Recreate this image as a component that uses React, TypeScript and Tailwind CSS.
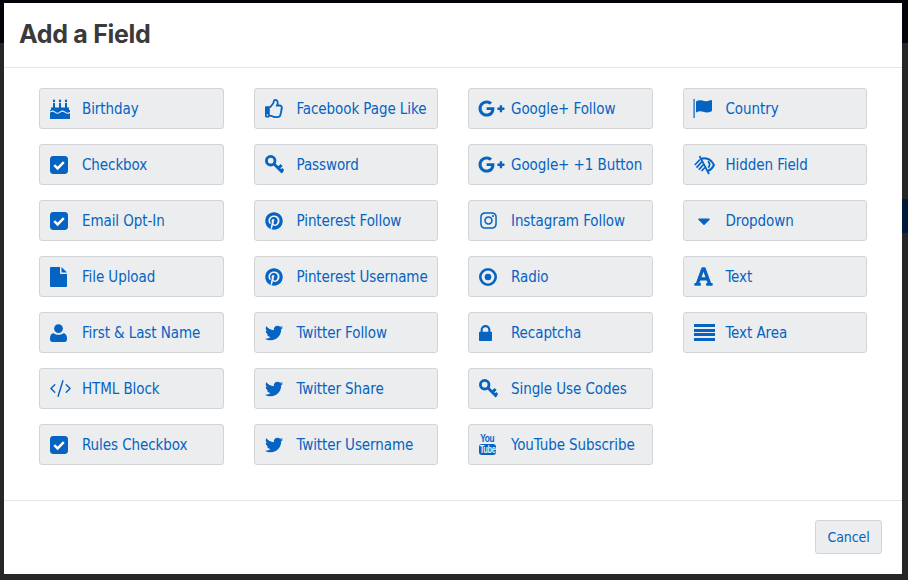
import type { ReactNode } from "react";
import {
  FaRegThumbsUp,
  FaPinterest,
  FaTwitter,
  FaGooglePlusG,
  FaInstagram,
  FaCaretDown,
  FaFont,
} from "react-icons/fa";
import { CodeXml } from "lucide-react";

const BG = "#ebedef";

function CakeIcon() {
  return (
    <svg viewBox="0 0 20 20" className="w-[20px] h-[20px]" fill="currentColor">
      <path d="M4 0c.8.9 1.200 1.500 1.200 2.100a1.200 1.200 0 0 1-2.400 0c0-.6.4-1.200 1.200-2.100zM10 0c.8.9 1.200 1.500 1.200 2.100a1.200 1.200 0 0 1-2.400 0c0-.6.4-1.200 1.200-2.100zM16 0c.8.9 1.200 1.500 1.200 2.100a1.200 1.200 0 0 1-2.400 0c0-.6.4-1.200 1.200-2.100z" />
      <rect x="3" y="4" width="2" height="6" />
      <rect x="9" y="4" width="2" height="6" />
      <rect x="15" y="4" width="2" height="6" />
      <path d="M1 8.500h18v3H1zM0 11h20v9H0z" />
      <path d="M0 13.200c1.700-1.400 3.300-1.400 5 0s3.300 1.400 5 0 3.300-1.400 5 0 3.300 1.400 5 0" fill="none" stroke={BG} strokeWidth="1.100" />
    </svg>
  );
}

function CheckIcon() {
  return (
    <svg viewBox="0 0 18 18" className="w-[18px] h-[18px]">
      <rect width="18" height="18" rx="3.400" fill="currentColor" />
      <path d="M4.300 9.200l3.300 3.200 6.200-6.200" fill="none" stroke="white" strokeWidth="2.500" />
    </svg>
  );
}

function FileIcon() {
  return (
    <svg viewBox="0 0 17 20" className="w-[17px] h-[20px]" fill="currentColor">
      <path d="M0 .8C0 .3.3 0 .8 0H10v6c0 .6.4 1 1 1h6v12.200c0 .5-.3.8-.8.8H.8c-.5 0-.8-.3-.8-.8z" />
      <path d="M11.500 0l5.500 5.500h-5.500z" />
    </svg>
  );
}

function UserIcon() {
  return (
    <svg viewBox="0 0 17 18" className="w-[17px] h-[18px]" fill="currentColor">
      <circle cx="8.500" cy="4.600" r="4.400" />
      <path d="M0 14.200c0-3.200 1.700-5 3.800-5 1.200 1 2.900 1.600 4.700 1.600s3.500-.6 4.700-1.600c2.100 0 3.800 1.800 3.800 5v1.300c0 1.500-1 2.500-2.400 2.500H2.400C1 18 0 17 0 15.500z" />
    </svg>
  );
}

function KeyIcon() {
  return (
    <svg viewBox="0 0 20 20" className="w-[19px] h-[19px]" fill="none" stroke="currentColor" strokeWidth="3">
      <circle cx="6" cy="6" r="4.500" />
      <path d="M9 9l9.500 9.500M14 14l3.500-3.500M17 17l2.200-2.200" />
    </svg>
  );
}

function RadioIcon() {
  return (
    <svg viewBox="0 0 18 18" className="w-[18px] h-[18px]" fill="currentColor">
      <circle cx="9" cy="9" r="7.700" fill="none" stroke="currentColor" strokeWidth="2.600" />
      <circle cx="9" cy="9" r="3.300" />
    </svg>
  );
}

function LockIcon() {
  return (
    <svg viewBox="0 0 13 16" className="w-[13px] h-[16px]" fill="currentColor">
      <path d="M0 7.500c0-.5.3-.8.8-.8h.8V5a4.900 4.900 0 0 1 9.800 0v1.700h.8c.5 0 .8.3.8.8v7.700c0 .5-.3.8-.8.8H.8c-.5 0-.8-.3-.8-.8zM3.700 6.700h5.600V5a2.800 2.800 0 0 0-5.600 0z" />
    </svg>
  );
}

function FlagIcon() {
  return (
    <svg viewBox="0 0 20 20" className="w-[20px] h-[20px] -mt-[1px] -ml-[1px]" fill="currentColor">
      <rect x="0.500" y="1" width="1.200" height="19" />
      <path d="M3 3.500c2-1.500 4-1.700 6.300-.9 2.600.9 5 1 8-.4.9-.4 1.700-.2 1.700.7v9.500c0 .5-.2.8-.7 1-2.900 1.300-5.400 1.300-8 .4-2.400-.8-4.700-.7-7.300.7z" />
    </svg>
  );
}

function HiddenIcon() {
  return (
    <svg viewBox="0 0 21 20" className="w-[21px] h-[20px]" fill="none" stroke="currentColor">
      <path d="M7 3.800c1-.3 2.200-.5 3.500-.5 4.300 0 7.600 3 9.500 6.700-1.200 2.600-3.400 4.900-6.300 6" strokeWidth="1.900" />
      <path d="M14 6.200c1.800 1.800 1.800 4.600.3 6.500" strokeWidth="1.700" />
      <path d="M5.500 1l9.500 18" strokeWidth="1.700" />
      <path d="M.8 10L6 4.500M2.500 12.600L8 6.500M4.800 14.600L9.300 9.700M7.500 16L11 12.500" strokeWidth="1.700" />
    </svg>
  );
}

function YoutubeIcon() {
  return (
    <span className="flex flex-col items-center w-[17px] font-['Liberation_Sans',sans-serif] font-bold">
      <span className="text-[11px] h-[9px] leading-[9px] tracking-[-0.5px] scale-x-75">You</span>
      <span className="mt-[1px] w-[17px] h-[11px] bg-[#0563c1] rounded-[3px] text-[#ebedef] text-[10px] leading-[11px] text-center overflow-hidden">
        <span className="inline-block scale-x-75 tracking-[-0.5px] -ml-[2px] -mr-[2px]">Tube</span>
      </span>
    </span>
  );
}

function TextAreaIcon() {
  return (
    <span className="flex flex-col gap-[1.67px] w-[21px]">
      <span className="h-[3px] bg-[#0563c1]" />
      <span className="h-[3px] bg-[#0563c1]" />
      <span className="h-[3px] bg-[#0563c1]" />
      <span className="h-[3px] bg-[#0563c1]" />
    </span>
  );
}

const check = <CheckIcon />;
const pin = <FaPinterest className="w-[18px] h-[18px]" />;
const bird = <FaTwitter className="w-[18px] h-[18px]" />;
const gplus = <FaGooglePlusG className="w-[27px] h-[27px] -ml-[1px] shrink-0" />;

type Field = { label: string; icon: ReactNode } | null;

const fields: Field[] = [
  { label: "Birthday", icon: <CakeIcon /> },
  { label: "Facebook Page Like", icon: <FaRegThumbsUp className="w-[19px] h-[19px]" /> },
  { label: "Google+ Follow", icon: gplus },
  { label: "Country", icon: <FlagIcon /> },

  { label: "Checkbox", icon: check },
  { label: "Password", icon: <KeyIcon /> },
  { label: "Google+ +1 Button", icon: gplus },
  { label: "Hidden Field", icon: <HiddenIcon /> },

  { label: "Email Opt-In", icon: check },
  { label: "Pinterest Follow", icon: pin },
  { label: "Instagram Follow", icon: <FaInstagram className="w-[19px] h-[19px]" /> },
  { label: "Dropdown", icon: <FaCaretDown className="w-[20px] h-[20px]" /> },

  { label: "File Upload", icon: <FileIcon /> },
  { label: "Pinterest Username", icon: pin },
  { label: "Radio", icon: <RadioIcon /> },
  { label: "Text", icon: <FaFont className="w-[21px] h-[21px] -ml-[1px]" /> },

  { label: "First & Last Name", icon: <UserIcon /> },
  { label: "Twitter Follow", icon: bird },
  { label: "Recaptcha", icon: <LockIcon /> },
  { label: "Text Area", icon: <TextAreaIcon /> },

  { label: "HTML Block", icon: <CodeXml className="w-[23px] h-[23px] -ml-[1px]" strokeWidth={1.5} /> },
  { label: "Twitter Share", icon: bird },
  { label: "Single Use Codes", icon: <KeyIcon /> },
  null,

  { label: "Rules Checkbox", icon: check },
  { label: "Twitter Username", icon: bird },
  { label: "YouTube Subscribe", icon: <YoutubeIcon /> },
  null,
];

export default function App() {
  return (
    <div className="relative w-[908px] h-[580px] overflow-hidden bg-[#262626] pt-[3px] pl-[4px] pr-[6px] pb-[6px] font-['DejaVu_Sans_Condensed','DejaVu_Sans',sans-serif]">
      {/* what's left of the page behind the modal */}
      <div className="absolute left-0 right-0 top-0 h-[43px] bg-[#02040a]" />
      <div className="absolute right-0 top-[199px] w-[6px] h-[34px] bg-[#001b3a]" />

      <div className="relative h-full bg-white flex flex-col">
        <div className="h-[65px] border-b border-[#e5e5e5] pl-[15px] flex items-center shrink-0">
          <h2 className="font-['Inter',sans-serif] text-[25px] font-bold text-[#3a3a3a] tracking-[-0.3px]">
            Add a Field
          </h2>
        </div>

        <div className="flex-1 px-[35px] pt-[20px]">
          <div className="grid grid-cols-4 gap-x-[30px] gap-y-[15px]">
            {fields.map((f, i) =>
              f ? (
                <button
                  key={i}
                  className="relative h-[41px] flex items-center pl-[10px] bg-[#ebedef] border border-[#d2d4d7] rounded-[3px] text-[#0563c1] text-[15px] tracking-[-0.08px] whitespace-nowrap"
                >
                  <span className="w-[32px] shrink-0 flex items-center">{f.icon}</span>
                  <span className="pt-[2px]">{f.label}</span>
                </button>
              ) : (
                <div key={i} />
              )
            )}
          </div>
        </div>

        <div className="h-[74px] border-t border-[#e5e5e5] flex items-start justify-end pt-[19px] pr-[20px] shrink-0">
          <button className="w-[67px] h-[34px] bg-[#ebedef] border border-[#d2d4d7] rounded-[3px] text-[#0563c1] text-[14px] tracking-[-0.1px]">
            Cancel
          </button>
        </div>
      </div>
    </div>
  );
}
